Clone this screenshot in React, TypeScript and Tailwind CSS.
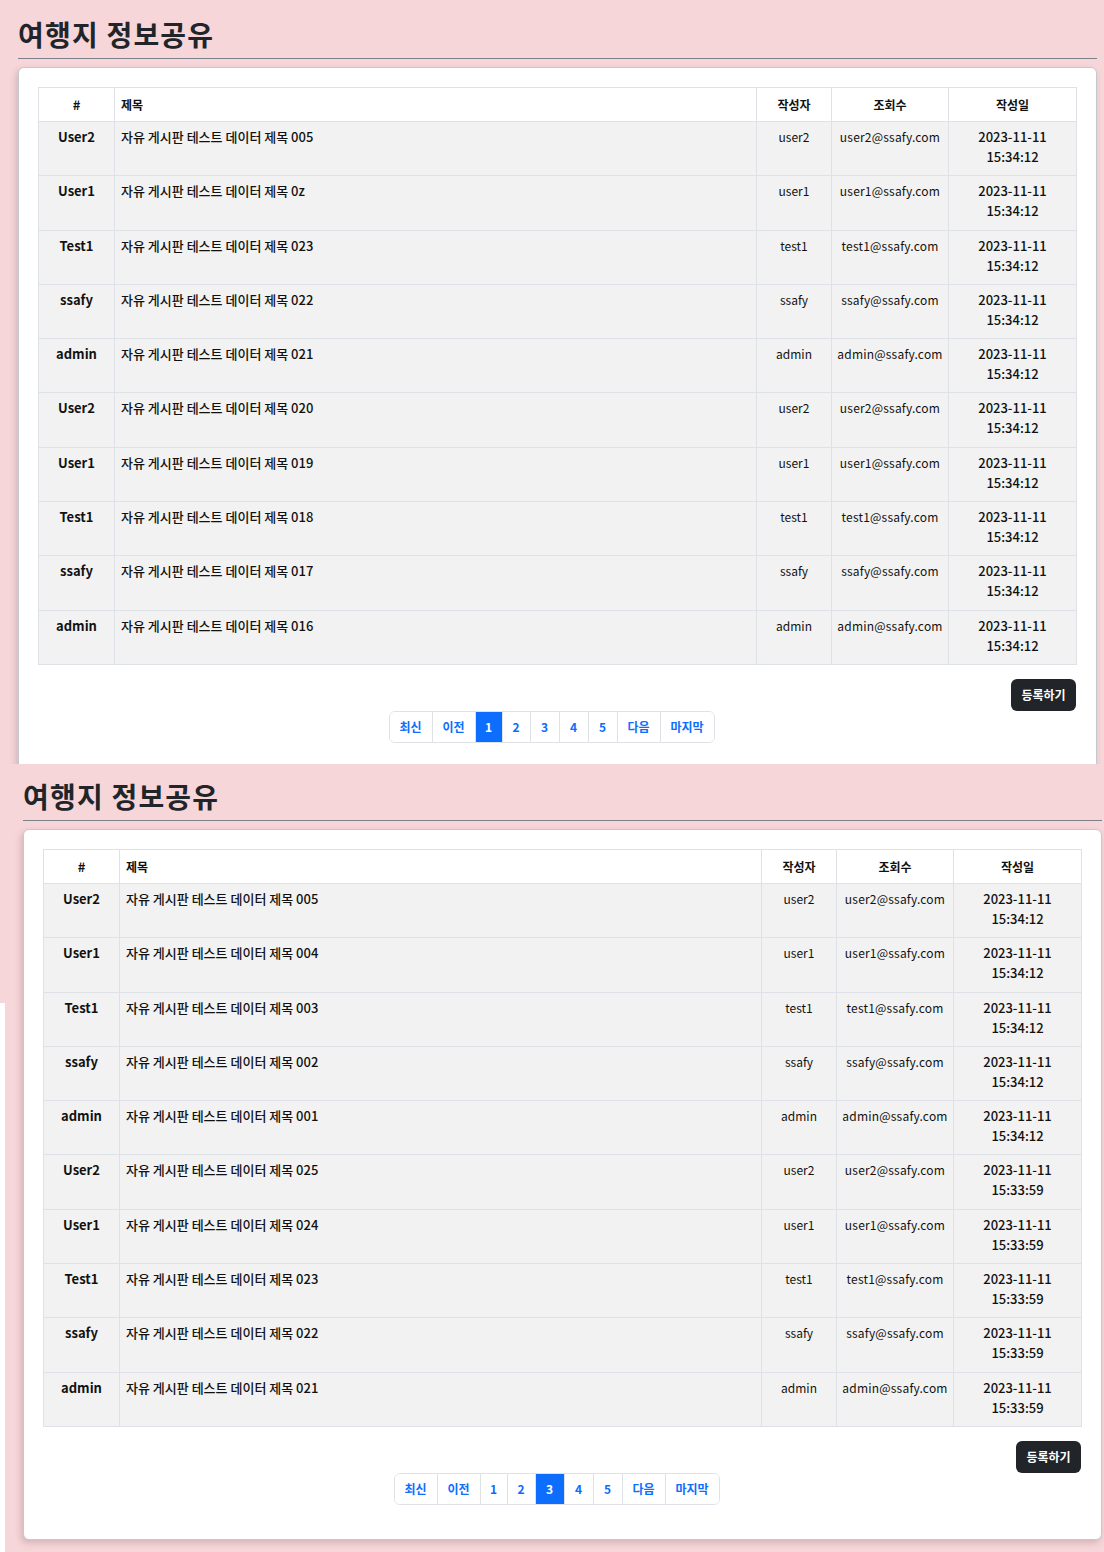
import React from "react";

type Row = { n: string; t: string; a: string; e: string; time: string };

const font = { fontFamily: '"Noto Sans CJK KR", "Noto Sans", sans-serif' };

const rows1: Row[] = [
  { n: "User2", t: "005", a: "user2", e: "user2@ssafy.com", time: "15:34:12" },
  { n: "User1", t: "0z", a: "user1", e: "user1@ssafy.com", time: "15:34:12" },
  { n: "Test1", t: "023", a: "test1", e: "test1@ssafy.com", time: "15:34:12" },
  { n: "ssafy", t: "022", a: "ssafy", e: "ssafy@ssafy.com", time: "15:34:12" },
  { n: "admin", t: "021", a: "admin", e: "admin@ssafy.com", time: "15:34:12" },
  { n: "User2", t: "020", a: "user2", e: "user2@ssafy.com", time: "15:34:12" },
  { n: "User1", t: "019", a: "user1", e: "user1@ssafy.com", time: "15:34:12" },
  { n: "Test1", t: "018", a: "test1", e: "test1@ssafy.com", time: "15:34:12" },
  { n: "ssafy", t: "017", a: "ssafy", e: "ssafy@ssafy.com", time: "15:34:12" },
  { n: "admin", t: "016", a: "admin", e: "admin@ssafy.com", time: "15:34:12" },
];

const rows2: Row[] = [
  { n: "User2", t: "005", a: "user2", e: "user2@ssafy.com", time: "15:34:12" },
  { n: "User1", t: "004", a: "user1", e: "user1@ssafy.com", time: "15:34:12" },
  { n: "Test1", t: "003", a: "test1", e: "test1@ssafy.com", time: "15:34:12" },
  { n: "ssafy", t: "002", a: "ssafy", e: "ssafy@ssafy.com", time: "15:34:12" },
  { n: "admin", t: "001", a: "admin", e: "admin@ssafy.com", time: "15:34:12" },
  { n: "User2", t: "025", a: "user2", e: "user2@ssafy.com", time: "15:33:59" },
  { n: "User1", t: "024", a: "user1", e: "user1@ssafy.com", time: "15:33:59" },
  { n: "Test1", t: "023", a: "test1", e: "test1@ssafy.com", time: "15:33:59" },
  { n: "ssafy", t: "022", a: "ssafy", e: "ssafy@ssafy.com", time: "15:33:59" },
  { n: "admin", t: "021", a: "admin", e: "admin@ssafy.com", time: "15:33:59" },
];

type PageItem = { label: string; w: string };

function Pagination({ active }: { active: string }) {
  const items: PageItem[] = [
    { label: "최신", w: "w-[42px]" },
    { label: "이전", w: "w-[43px]" },
    { label: "1", w: "w-[27px]" },
    { label: "2", w: "w-[28px]" },
    { label: "3", w: "w-[29px]" },
    { label: "4", w: "w-[29px]" },
    { label: "5", w: "w-[29px]" },
    { label: "다음", w: "w-[43px]" },
    { label: "마지막", w: "w-[54px]" },
  ];
  return (
    <div className="flex justify-center pr-[11px]">
      <div className="flex h-[32px] rounded-[6px] border border-[#dee2e6] overflow-hidden">
        {items.map((it, i) => (
          <div
            key={i}
            className={
              "flex items-center justify-center text-[12px] font-bold " +
              it.w +
              (i > 0 ? " border-l border-[#dee2e6]" : "") +
              (it.label === active ? " bg-[#0d6efd] text-white border-[#0d6efd]" : " bg-white text-[#0d6efd]")
            }
          >
            {it.label}
          </div>
        ))}
      </div>
    </div>
  );
}

function Page({ rows, active }: { rows: Row[]; active: string }) {
  return (
    <div className="w-[1104px] bg-[#f6d6d9] pl-[18px] pr-[7px] pt-[16px] pb-[14px]" style={font}>
      <h1 className="text-[28px] leading-[36px] font-bold text-[#212529] tracking-[1.2px]">여행지 정보공유</h1>
      <div className="mt-[6px] border-t border-[#7d828a]" />
      <div className="mt-[8px] rounded-[6px] border border-[#c4c9ce] bg-white shadow-[-2px_3px_6px_rgba(120,80,80,0.25)] pt-[19px] pl-[19px] pr-[20px] pb-[34px]">
        <table className="w-[1038px] border-collapse table-fixed text-[#111]">
          <colgroup>
            <col className="w-[76px]" />
            <col className="w-[642px]" />
            <col className="w-[75px]" />
            <col className="w-[117px]" />
            <col className="w-[128px]" />
          </colgroup>
          <thead>
            <tr className="h-[34px] bg-white text-[12px] font-bold">
              <th className="border border-[#dee2e6] text-center align-middle text-[13px]">#</th>
              <th className="border border-[#dee2e6] text-left align-middle px-[6px]">제목</th>
              <th className="border border-[#dee2e6] text-center align-middle">작성자</th>
              <th className="border border-[#dee2e6] text-center align-middle">조회수</th>
              <th className="border border-[#dee2e6] text-center align-middle">작성일</th>
            </tr>
          </thead>
          <tbody>
            {rows.map((r, i) => (
              <tr key={i} className="h-[54.3px] bg-[#f2f2f2] text-[13px] leading-[20px]">
                <td className="border border-[#dee2e6] text-center align-top pt-[5px] font-bold">{r.n}</td>
                <td className="border border-[#dee2e6] text-left align-top pt-[5px] px-[6px] font-medium">
                  자유 게시판 테스트 데이터 제목 {r.t}
                </td>
                <td className="border border-[#dee2e6] text-center align-top pt-[5px] text-[12px]">{r.a}</td>
                <td className="border border-[#dee2e6] text-center align-top pt-[5px] text-[12px] tracking-[0.2px]">{r.e}</td>
                <td className="border border-[#dee2e6] text-center align-top pt-[5px] font-medium">
                  <div>2023-11-11</div>
                  <div>{r.time}</div>
                </td>
              </tr>
            ))}
          </tbody>
        </table>
        <div className="mt-[14px] flex justify-end">
          <div className="flex h-[32px] w-[65px] items-center justify-center rounded-[6px] bg-[#212529] text-[12px] font-bold text-white">
            등록하기
          </div>
        </div>
        <Pagination active={active} />
      </div>
    </div>
  );
}

export default function App() {
  return (
    <div className="w-[1104px] bg-white">
      <div className="h-[764px] overflow-hidden">
        <Page rows={rows1} active="1" />
      </div>
      <div className="flex h-[788px] overflow-hidden">
        <div className="flex w-[5px] flex-col">
          <div className="h-[239px] bg-[#f6d6d9]" />
          <div className="flex-1 bg-white" />
        </div>
        <div className="flex-1 overflow-hidden">
          <div className="-mt-[2px]">
            <Page rows={rows2} active="3" />
          </div>
        </div>
      </div>
    </div>
  );
}
